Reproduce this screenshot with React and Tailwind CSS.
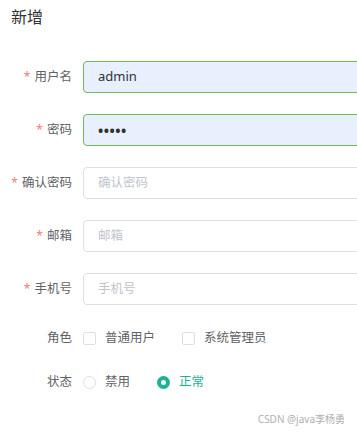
import React from "react";

const font = { fontFamily: '"Noto Sans", "Noto Sans CJK SC", sans-serif' };

function Field({ label, required, children }) {
	return (
		<div className="flex items-center h-8">
			<label className="w-[83px] shrink-0 pr-[11px] text-right text-[12.5px] text-[#606266]">
				{required && <span className="text-[#f37b7b] text-[12px] mr-[4px]">*</span>}
				{label}
			</label>
			{children}
		</div>
	);
}

function Input({ value, placeholder, filled, password }) {
	if (filled) {
		return (
			<div className="w-[300px] shrink-0 h-8 rounded-[4px] border border-[#6cbf4f] bg-[#e8f0fe] pl-[14px] flex items-center text-[13px] text-[#303133]">
				{password ? <span className="tracking-[0.5px] text-[14px] font-bold">•••••</span> : value}
			</div>
		);
	}
	return (
		<div className="w-[300px] shrink-0 h-8 rounded-[4px] border border-[#dcdfe6] bg-white pl-[14px] flex items-center text-[12.5px] text-[#c0c4cc]">
			{placeholder}
		</div>
	);
}

export default function App() {
	return (
		<div className="w-[357px] h-[435px] bg-white overflow-hidden relative" style={font}>
			<h2 className="pl-[11px] pt-[5px] text-[16px] text-[#303133] leading-6">新增</h2>

			<div className="mt-[32px] flex flex-col gap-[21px]">
				<Field label="用户名" required>
					<Input filled value="admin" />
				</Field>
				<Field label="密码" required>
					<Input filled password />
				</Field>
				<Field label="确认密码" required>
					<Input placeholder="确认密码" />
				</Field>
				<Field label="邮箱" required>
					<Input placeholder="邮箱" />
				</Field>
				<Field label="手机号" required>
					<Input placeholder="手机号" />
				</Field>
			</div>

			<div className="mt-[17px]">
				<Field label="角色">
					<div className="flex items-center text-[12.5px] text-[#606266]">
						<span className="w-[13px] h-[13px] border border-[#dcdfe6] rounded-[2px] bg-white" />
						<span className="ml-[9px]">普通用户</span>
						<span className="ml-[27px] w-[13px] h-[13px] border border-[#dcdfe6] rounded-[2px] bg-white" />
						<span className="ml-[9px]">系统管理员</span>
					</div>
				</Field>
			</div>

			<div className="mt-[12px]">
				<Field label="状态">
					<div className="flex items-center text-[12.5px] text-[#606266]">
						<span className="w-[13px] h-[13px] border border-[#dcdfe6] rounded-full bg-white" />
						<span className="ml-[9px]">禁用</span>
						<span className="ml-[27px] w-[13px] h-[13px] rounded-full bg-[#1ab394] flex items-center justify-center">
							<span className="w-[5px] h-[5px] rounded-full bg-white" />
						</span>
						<span className="ml-[9px] text-[#1ab394]">正常</span>
					</div>
				</Field>
			</div>

			<div className="absolute right-[12px] bottom-[8px] text-[10px] text-[#b0b0b0]">
				CSDN @java李杨勇
			</div>
		</div>
	);
}
